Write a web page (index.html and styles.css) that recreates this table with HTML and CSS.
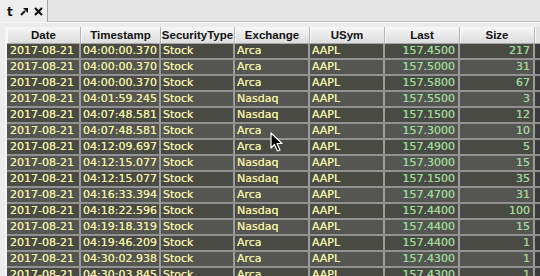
FILE: index.html
```html
<!DOCTYPE html>
<html>
<head>
<meta charset="utf-8">
<link rel="stylesheet" href="styles.css">
</head>
<body>
<div class="app">
  <div class="tabbar">
    <div class="tab">
      <span class="tab-title">t</span>
      <svg class="pin" width="8" height="8" viewBox="0 0 8 8"><path d="M3 0 L8 0 L8 5 Z" fill="#111"/><path d="M1 7 L5 3" stroke="#111" stroke-width="2"/></svg>
      <svg class="close" width="9" height="9" viewBox="0 0 9 9"><path d="M1 1 L8 8 M8 1 L1 8" stroke="#111" stroke-width="2.2"/></svg>
    </div>
  </div>
  <div class="panel">
    <div class="grid">
      <div class="row head">
        <div class="c c1">Date</div><div class="c c2">Timestamp</div><div class="c c3">SecurityType</div><div class="c c4">Exchange</div><div class="c c5">USym</div><div class="c c6">Last</div><div class="c c7">Size</div><div class="c fill"></div>
      </div>
      <div class="row"><div class="c c1">2017-08-21</div><div class="c c2">04:00:00.370</div><div class="c c3">Stock</div><div class="c c4">Arca</div><div class="c c5">AAPL</div><div class="c c6 n">157.4500</div><div class="c c7 n">217</div><div class="c fill"></div></div>
      <div class="row alt"><div class="c c1">2017-08-21</div><div class="c c2">04:00:00.370</div><div class="c c3">Stock</div><div class="c c4">Arca</div><div class="c c5">AAPL</div><div class="c c6 n">157.5000</div><div class="c c7 n">31</div><div class="c fill"></div></div>
      <div class="row"><div class="c c1">2017-08-21</div><div class="c c2">04:00:00.370</div><div class="c c3">Stock</div><div class="c c4">Arca</div><div class="c c5">AAPL</div><div class="c c6 n">157.5800</div><div class="c c7 n">67</div><div class="c fill"></div></div>
      <div class="row alt"><div class="c c1">2017-08-21</div><div class="c c2">04:01:59.245</div><div class="c c3">Stock</div><div class="c c4">Nasdaq</div><div class="c c5">AAPL</div><div class="c c6 n">157.5500</div><div class="c c7 n">3</div><div class="c fill"></div></div>
      <div class="row"><div class="c c1">2017-08-21</div><div class="c c2">04:07:48.581</div><div class="c c3">Stock</div><div class="c c4">Nasdaq</div><div class="c c5">AAPL</div><div class="c c6 n">157.1500</div><div class="c c7 n">12</div><div class="c fill"></div></div>
      <div class="row alt"><div class="c c1">2017-08-21</div><div class="c c2">04:07:48.581</div><div class="c c3">Stock</div><div class="c c4">Arca</div><div class="c c5">AAPL</div><div class="c c6 n">157.3000</div><div class="c c7 n">10</div><div class="c fill"></div></div>
      <div class="row"><div class="c c1">2017-08-21</div><div class="c c2">04:12:09.697</div><div class="c c3">Stock</div><div class="c c4">Arca</div><div class="c c5">AAPL</div><div class="c c6 n">157.4900</div><div class="c c7 n">5</div><div class="c fill"></div></div>
      <div class="row alt"><div class="c c1">2017-08-21</div><div class="c c2">04:12:15.077</div><div class="c c3">Stock</div><div class="c c4">Nasdaq</div><div class="c c5">AAPL</div><div class="c c6 n">157.3000</div><div class="c c7 n">15</div><div class="c fill"></div></div>
      <div class="row"><div class="c c1">2017-08-21</div><div class="c c2">04:12:15.077</div><div class="c c3">Stock</div><div class="c c4">Nasdaq</div><div class="c c5">AAPL</div><div class="c c6 n">157.1500</div><div class="c c7 n">35</div><div class="c fill"></div></div>
      <div class="row alt"><div class="c c1">2017-08-21</div><div class="c c2">04:16:33.394</div><div class="c c3">Stock</div><div class="c c4">Arca</div><div class="c c5">AAPL</div><div class="c c6 n">157.4700</div><div class="c c7 n">31</div><div class="c fill"></div></div>
      <div class="row"><div class="c c1">2017-08-21</div><div class="c c2">04:18:22.596</div><div class="c c3">Stock</div><div class="c c4">Nasdaq</div><div class="c c5">AAPL</div><div class="c c6 n">157.4400</div><div class="c c7 n">100</div><div class="c fill"></div></div>
      <div class="row alt"><div class="c c1">2017-08-21</div><div class="c c2">04:19:18.319</div><div class="c c3">Stock</div><div class="c c4">Nasdaq</div><div class="c c5">AAPL</div><div class="c c6 n">157.4400</div><div class="c c7 n">15</div><div class="c fill"></div></div>
      <div class="row"><div class="c c1">2017-08-21</div><div class="c c2">04:19:46.209</div><div class="c c3">Stock</div><div class="c c4">Arca</div><div class="c c5">AAPL</div><div class="c c6 n">157.4400</div><div class="c c7 n">1</div><div class="c fill"></div></div>
      <div class="row alt"><div class="c c1">2017-08-21</div><div class="c c2">04:30:02.938</div><div class="c c3">Stock</div><div class="c c4">Arca</div><div class="c c5">AAPL</div><div class="c c6 n">157.4300</div><div class="c c7 n">1</div><div class="c fill"></div></div>
      <div class="row"><div class="c c1">2017-08-21</div><div class="c c2">04:30:03.845</div><div class="c c3">Stock</div><div class="c c4">Arca</div><div class="c c5">AAPL</div><div class="c c6 n">157.4300</div><div class="c c7 n">1</div><div class="c fill"></div></div>
    </div>
  </div>
  <svg class="cursor" width="14" height="20" viewBox="0 0 14 20"><path d="M1 1 L1 16 L4.5 12.5 L7.5 19 L10 18 L7 11.5 L12 11.5 Z" fill="#000" stroke="#fff" stroke-width="1.2" stroke-linejoin="round"/></svg>
</div>
</body>
</html>
```
FILE: styles.css
```css
html, body {
  margin: 0;
  padding: 0;
  width: 540px;
  height: 276px;
  overflow: hidden;
  background: #e6e6e6;
}
.app {
  position: relative;
  width: 540px;
  height: 276px;
  overflow: hidden;
  font-family: "DejaVu Sans", sans-serif;
}
.tabbar {
  height: 21px;
  display: flex;
  background: #e4e4e4;
  border-bottom: 1px solid #bdbdbd;
}
.tab {
  width: 48px;
  height: 22px;
  box-sizing: border-box;
  background: #eeeeee;
  border-right: 1px solid #a6a6a6;
  display: flex;
  align-items: center;
  padding: 0 0 0 7px;
  gap: 5px;
}
.tab-title {
  font-weight: bold;
  font-size: 12px;
  color: #111;
  margin-top: 1px;
}
.pin { margin-left: 2px; margin-top: 1px; }
.close { margin-left: 1px; margin-top: 1px; }
.panel {
  background: #ececec;
  padding: 4px 0 0 5px;
  border-top: 1px solid #f8f8f8;
}
.grid {
  border-left: 2px solid #f6f6f6;
  background: #3c3c3a;
}
.row {
  display: flex;
  height: 16px;
  box-sizing: border-box;
  border-bottom: 2px solid #929292;
  background: #4a4a45;
}
.row.alt { background: #555551; }
.c {
  box-sizing: border-box;
  border-right: 2px solid #9c9c9c;
  font-size: 11px;
  line-height: 14px;
  color: #f0f0a4;
  padding: 0 0 0 2px;
  white-space: nowrap;
  overflow: hidden;
  text-shadow: 0 0 0.4px #f0f0a4;
}
.c.n {
  color: #9cd898;
  text-shadow: 0 0 0.4px #9cd898;
  text-align: right;
  padding: 0 3px 0 0;
}
.c1 { width: 74px; padding-left: 3px; }
.c2 { width: 80px; }
.c3 { width: 74px; }
.c4 { width: 75px; }
.c5 { width: 75px; }
.c6 { width: 75px; }
.c7 { width: 75px; }
.fill { width: 5px; border-right: none; background: #3a3a3a; }
.row.head {
  height: 17px;
  background: linear-gradient(#f7f7f7, #dcdcdc);
  border-bottom: 1px solid #a8a8a8;
}
.head .c {
  font-family: "Liberation Sans", sans-serif;
  font-weight: bold;
  font-size: 11.5px;
  line-height: 16px;
  color: #111;
  text-shadow: none;
  text-align: center;
  padding: 0;
  border-right: 1px solid #b4b4b4;
  box-shadow: inset 1px 0 0 #fafafa;
}
.head .fill { background: #e2e2e2; border-right: none; }
.cursor {
  position: absolute;
  left: 270px;
  top: 132px;
}
```
